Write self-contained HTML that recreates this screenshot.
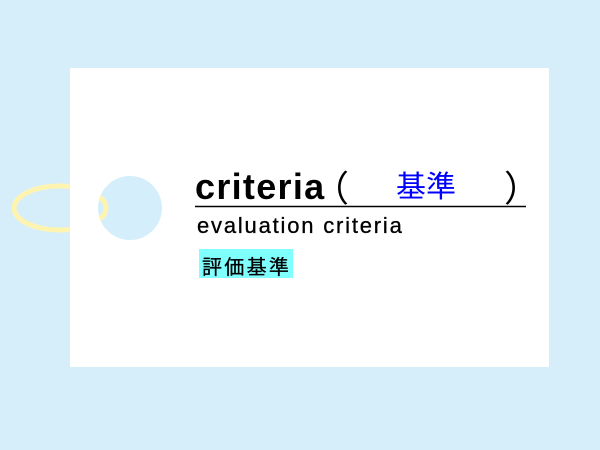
<!DOCTYPE html>
<html><head><meta charset="utf-8"><style>
html,body{margin:0;padding:0}
body{width:600px;height:450px;background:#d6eefa;position:relative;overflow:hidden;font-family:"Liberation Sans","Noto Sans CJK JP",sans-serif}
.card{position:absolute;left:70px;top:68px;width:479px;height:299px;background:#fff}
.t{position:absolute;white-space:nowrap}
</style></head><body>
<svg width="600" height="450" style="position:absolute;left:0;top:0">
<defs>
<clipPath id="out"><path d="M0 0H70V450H0Z"/></clipPath>
<clipPath id="cir"><circle cx="130" cy="208" r="32"/></clipPath>
</defs>
<ellipse cx="60" cy="208" rx="46" ry="22" fill="none" stroke="#fff3b0" stroke-width="5" clip-path="url(#out)"/>
</svg>
<div class="card"></div>
<svg width="600" height="450" style="position:absolute;left:0;top:0">
<circle cx="130" cy="208" r="32" fill="#d4eefb"/>
<ellipse cx="60" cy="208" rx="46" ry="22" fill="none" stroke="#fff3b0" stroke-width="5" clip-path="url(#cir)"/>
<line x1="195" y1="206.5" x2="526" y2="206.5" stroke="#000" stroke-width="1.5"/>
</svg>
<div class="t" style="left:195px;top:166px;font-size:36px;font-weight:bold;color:#000;letter-spacing:1.3px">criteria</div>
<div class="t" style="left:313px;top:160px;font-size:36px;color:#000">（</div>
<div class="t" style="left:396px;top:162px;font-size:30px;color:#0000ff">基準</div>
<div class="t" style="left:504px;top:160px;font-size:36px;color:#000">）</div>
<div class="t" style="left:197px;top:213px;font-size:22px;color:#000;letter-spacing:1.8px;-webkit-text-stroke:0.3px #000">evaluation criteria</div>
<div class="t" style="left:199px;top:249px;width:94px;height:29px;background:#80ffff"></div>
<div class="t" style="left:202px;top:251px;font-size:20px;letter-spacing:2.3px;color:#000;-webkit-text-stroke:0.3px #000">評価基準</div>
</body></html>
